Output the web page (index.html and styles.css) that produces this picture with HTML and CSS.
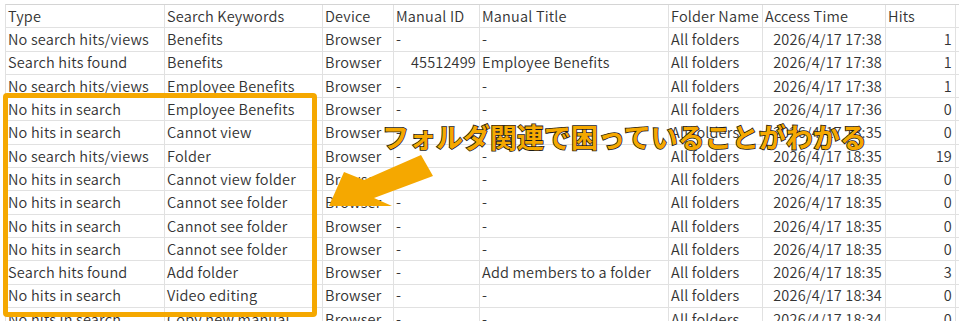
FILE: index.html
```html
<!DOCTYPE html>
<html lang="ja">
<head>
<meta charset="utf-8">
<link rel="stylesheet" href="styles.css">
</head>
<body>
<div class="sheet">
  <div class="grid">
    <div class="c">Type</div><div class="c">Search Keywords</div><div class="c">Device</div><div class="c">Manual ID</div><div class="c">Manual Title</div><div class="c">Folder Name</div><div class="c">Access Time</div><div class="c">Hits</div><div class="c"></div>

    <div class="c">No search hits/views</div><div class="c">Benefits</div><div class="c">Browser</div><div class="c">-</div><div class="c">-</div><div class="c">All folders</div><div class="c r">2026/4/17 17:38</div><div class="c r">1</div><div class="c"></div>

    <div class="c">Search hits found</div><div class="c">Benefits</div><div class="c">Browser</div><div class="c r">45512499</div><div class="c">Employee Benefits</div><div class="c">All folders</div><div class="c r">2026/4/17 17:38</div><div class="c r">1</div><div class="c"></div>

    <div class="c">No search hits/views</div><div class="c">Employee Benefits</div><div class="c">Browser</div><div class="c">-</div><div class="c">-</div><div class="c">All folders</div><div class="c r">2026/4/17 17:38</div><div class="c r">1</div><div class="c"></div>

    <div class="c">No hits in search</div><div class="c">Employee Benefits</div><div class="c">Browser</div><div class="c">-</div><div class="c">-</div><div class="c">All folders</div><div class="c r">2026/4/17 17:36</div><div class="c r">0</div><div class="c"></div>

    <div class="c">No hits in search</div><div class="c">Cannot view</div><div class="c">Browser</div><div class="c">-</div><div class="c">-</div><div class="c">All folders</div><div class="c r">2026/4/17 18:35</div><div class="c r">0</div><div class="c"></div>

    <div class="c">No search hits/views</div><div class="c">Folder</div><div class="c">Browser</div><div class="c">-</div><div class="c">-</div><div class="c">All folders</div><div class="c r">2026/4/17 18:35</div><div class="c r">19</div><div class="c"></div>

    <div class="c">No hits in search</div><div class="c">Cannot view folder</div><div class="c">Browser</div><div class="c">-</div><div class="c">-</div><div class="c">All folders</div><div class="c r">2026/4/17 18:35</div><div class="c r">0</div><div class="c"></div>

    <div class="c">No hits in search</div><div class="c">Cannot see folder</div><div class="c">Browser</div><div class="c">-</div><div class="c">-</div><div class="c">All folders</div><div class="c r">2026/4/17 18:35</div><div class="c r">0</div><div class="c"></div>

    <div class="c">No hits in search</div><div class="c">Cannot see folder</div><div class="c">Browser</div><div class="c">-</div><div class="c">-</div><div class="c">All folders</div><div class="c r">2026/4/17 18:35</div><div class="c r">0</div><div class="c"></div>

    <div class="c">No hits in search</div><div class="c">Cannot see folder</div><div class="c">Browser</div><div class="c">-</div><div class="c">-</div><div class="c">All folders</div><div class="c r">2026/4/17 18:35</div><div class="c r">0</div><div class="c"></div>

    <div class="c">Search hits found</div><div class="c">Add folder</div><div class="c">Browser</div><div class="c">-</div><div class="c">Add members to a folder</div><div class="c">All folders</div><div class="c r">2026/4/17 18:35</div><div class="c r">3</div><div class="c"></div>

    <div class="c">No hits in search</div><div class="c">Video editing</div><div class="c">Browser</div><div class="c">-</div><div class="c">-</div><div class="c">All folders</div><div class="c r">2026/4/17 18:34</div><div class="c r">0</div><div class="c"></div>

    <div class="c">No hits in search</div><div class="c">Copy new manual</div><div class="c">Browser</div><div class="c">-</div><div class="c">-</div><div class="c">All folders</div><div class="c r">2026/4/17 18:34</div><div class="c r">0</div><div class="c"></div>
  </div>

  <div class="highlight"></div>
  <svg class="arrow" width="959" height="321" viewBox="0 0 959 321">
    <polygon points="421,155 433,176 374,198 392,206 329,206 344,172 364,180" fill="#f5a800"/>
  </svg>
  <div class="callout">フォルダ関連で困っていることがわかる</div>
</div>
</body>
</html>
```

FILE: styles.css
```css
html, body {
  margin: 0;
  padding: 0;
  background: #ffffff;
}

body {
  width: 959px;
  height: 321px;
  overflow: hidden;
}

.sheet {
  position: relative;
  width: 959px;
  height: 321px;
  padding: 4px 0 0 5px;
  box-sizing: border-box;
  overflow: hidden;
}

.grid {
  display: grid;
  grid-template-columns: 159px 158px 71px 86px 189px 94px 123px 70px 60px;
  grid-auto-rows: 23.3px;
  border-top: 1px solid #d4d4d4;
  border-left: 1px solid #e1e1e1;
  font-family: "Noto Sans CJK JP", "Noto Sans", sans-serif;
  font-size: 14.5px;
  font-weight: 350;
  letter-spacing: 0.18px;
  color: #333333;
}

.c {
  border-right: 1px solid #e1e1e1;
  border-bottom: 1px solid #e1e1e1;
  padding: 0 3px 0 2px;
  display: flex;
  align-items: center;
  white-space: nowrap;
  overflow: hidden;
  line-height: 1;
}

.c.r {
  justify-content: flex-end;
}

.highlight {
  position: absolute;
  left: 3px;
  top: 93px;
  width: 314px;
  height: 224px;
  box-sizing: border-box;
  border: 5px solid #f5a800;
  border-radius: 4px;
}

.arrow {
  position: absolute;
  left: 0;
  top: 0;
}

.callout {
  position: absolute;
  left: 382px;
  top: 118px;
  font-family: "Noto Sans CJK JP", sans-serif;
  font-weight: 700;
  font-size: 27px;
  line-height: 38px;
  color: #f5a800;
  -webkit-text-stroke: 1.6px #1a1a1a;
  paint-order: stroke fill;
  white-space: nowrap;
}
```
